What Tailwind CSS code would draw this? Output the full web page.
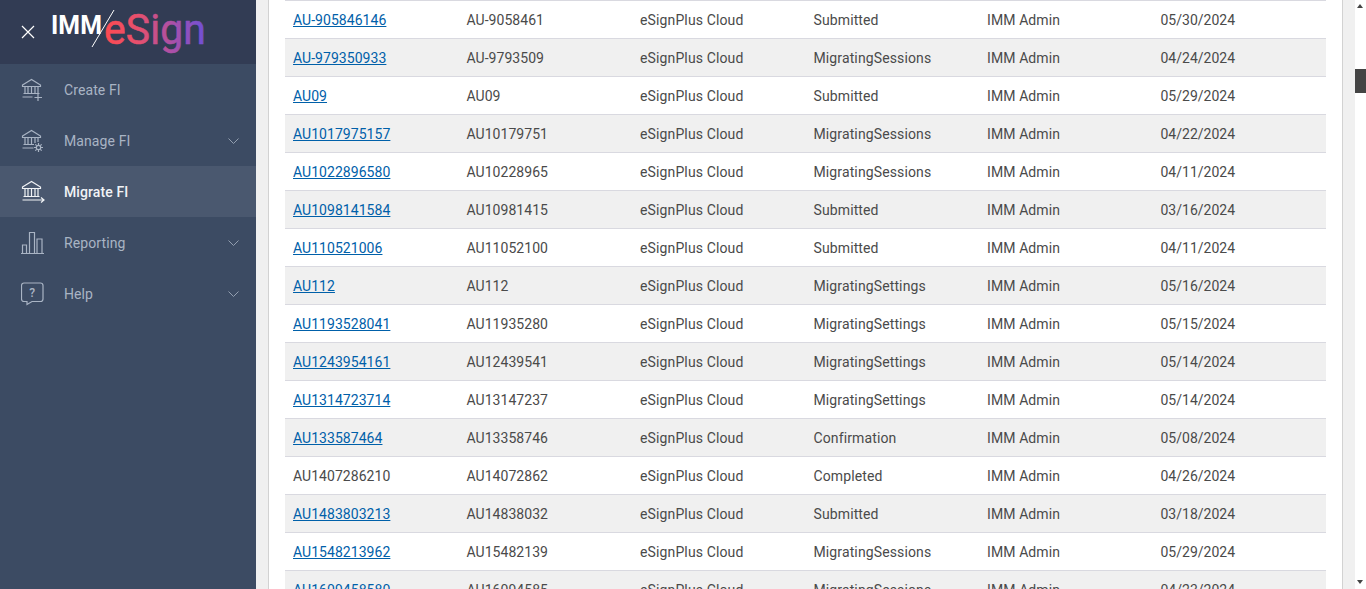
<!DOCTYPE html>
<html lang="en">

<head>
    <meta charset="UTF-8" />
    <meta name="viewport" content="width=device-width, initial-scale=1.0"/>
    <title>Migrate FI</title>
    <script src="https://cdn.jsdelivr.net/npm/@tailwindcss/browser@4"></script>
</head>

<body class="h-screen overflow-hidden bg-[#f0f0f0] font-['Roboto',sans-serif] text-sm text-[#4a4a4a]">

  <div class="flex h-[589px] overflow-hidden">

    <!-- Sidebar -->
    <aside class="w-64 shrink-0 bg-[#3c4b63] tracking-[0.1px] text-[#a9b4c4]">
      <div class="flex h-16 items-center bg-[#323c54] pl-[21px]">
        <svg class="h-[14px] w-[14px] shrink-0" viewBox="0 0 14 14" fill="none" stroke="#ffffff" stroke-width="1.2"><path d="M1 1l12 12M13 1L1 13"/></svg>
        <svg class="ml-[2px] h-16 w-[180px]" viewBox="0 0 180 64">
          <defs>
            <linearGradient id="logoGrad" x1="67" y1="0" x2="168" y2="0" gradientUnits="userSpaceOnUse">
              <stop offset="0" stop-color="#ff4a50"/>
              <stop offset="0.35" stop-color="#e5506f"/>
              <stop offset="0.7" stop-color="#a650ac"/>
              <stop offset="1" stop-color="#6f50d6"/>
            </linearGradient>
          </defs>
          <text x="14" y="34" font-family="Roboto" font-weight="700" font-size="26" fill="#ffffff" textLength="51" lengthAdjust="spacingAndGlyphs">IMM</text>
          <path d="M55 47L77 10" stroke="#ffffff" stroke-width="1"/>
          <text x="67" y="44" font-family="Roboto" font-weight="400" font-size="42" fill="url(#logoGrad)" stroke="url(#logoGrad)" stroke-width="0.6" textLength="102" lengthAdjust="spacingAndGlyphs">eSign</text>
        </svg>
      </div>

      <nav>
        <a href="#" class="flex h-[51px] items-center pl-[21px] pr-[17px]">
          <svg class="h-6 w-6 shrink-0" viewBox="0 0 24 24" fill="none" stroke="currentColor" stroke-width="1.2">
            <path d="M1.5 7L10.5 1.5L19.5 7V8.5H1.5zM4 8.5V15.5M7 8.5V15.5M10.5 8.5V15.5M14 8.5V15.5M17 8.5V15.5M2.5 15.5H18.5M1.5 19H11.5"/>
            <path d="M17 16V23M13.5 19.5H21"/>
          </svg>
          <span class="ml-[19px]">Create FI</span>
        </a>
        <a href="#" class="flex h-[51px] items-center pl-[21px] pr-[17px]">
          <svg class="h-6 w-6 shrink-0" viewBox="0 0 24 24" fill="none" stroke="currentColor" stroke-width="1.2">
            <path d="M1.5 7L10.5 1.5L19.5 7V8.5H1.5zM4 8.5V15.5M7 8.5V15.5M10.5 8.5V15.5M14 8.5V14M17 8.5V13M2.5 15.5H13M1.5 19H12.5"/>
            <circle cx="17.5" cy="18.5" r="2.2"/>
            <path d="M17.5 14v2M17.5 21v2M13 18.5h2M20 18.5h2M14.3 15.3l1.4 1.4M19.3 20.3l1.4 1.4M20.7 15.3l-1.4 1.4M15.7 20.3l-1.4 1.4"/>
          </svg>
          <span class="ml-[19px]">Manage FI</span>
          <svg class="ml-auto h-[6px] w-[11px] opacity-80" viewBox="0 0 11 6" fill="none" stroke="currentColor"><path d="M0.5 0.5l5 5 5-5"/></svg>
        </a>
        <a href="#" class="flex h-[51px] items-center bg-[#4a586f] pl-[21px] pr-[17px] font-medium text-[#f1f3f6]">
          <svg class="h-6 w-6 shrink-0" viewBox="0 0 24 24" fill="none" stroke="currentColor" stroke-width="1.2">
            <path d="M1.5 7L10.5 1.5L19.5 7V8.5H1.5zM4 8.5V16M7 8.5V16M10.5 8.5V16M14 8.5V16M17 8.5V16M2.5 16.5H18.5M1.5 20H22.5M20 17.5L23 20L20 22.5"/>
          </svg>
          <span class="ml-[19px]">Migrate FI</span>
        </a>
        <a href="#" class="flex h-[51px] items-center pl-[21px] pr-[17px]">
          <svg class="h-6 w-6 shrink-0" viewBox="0 0 24 24" fill="none" stroke="currentColor" stroke-width="1.2">
            <path d="M0 22.5H23M1.5 22V14H5.5V22M8.5 22V1.5H13.5V22M16 22V8H21V22"/>
          </svg>
          <span class="ml-[19px]">Reporting</span>
          <svg class="ml-auto h-[6px] w-[11px] opacity-80" viewBox="0 0 11 6" fill="none" stroke="currentColor"><path d="M0.5 0.5l5 5 5-5"/></svg>
        </a>
        <a href="#" class="flex h-[51px] items-center pl-[21px] pr-[17px]">
          <svg class="h-6 w-6 shrink-0" viewBox="0 0 24 24" fill="none" stroke="currentColor" stroke-width="1.2">
            <path d="M3 1H19.5A2.5 2.5 0 0 1 22 3.5V17A2.5 2.5 0 0 1 19.5 19.5H11L6 22.5V19.5H3A2.5 2.5 0 0 1 0.5 17V3.5A2.5 2.5 0 0 1 3 1Z"/>
            <text x="11.2" y="15" text-anchor="middle" font-family="Roboto" font-size="12" font-weight="500" fill="currentColor" stroke="none">?</text>
          </svg>
          <span class="ml-[19px]">Help</span>
          <svg class="ml-auto h-[6px] w-[11px] opacity-80" viewBox="0 0 11 6" fill="none" stroke="currentColor"><path d="M0.5 0.5l5 5 5-5"/></svg>
        </a>
      </nav>
    </aside>

    <!-- Main panel -->
    <main class="ml-3 h-full w-[1075px] shrink-0 overflow-hidden border-x border-[#d2d2d2] bg-white pl-4 pr-4">
      <table class="w-[1041px] table-fixed border-collapse">
        <tbody id="rows"></tbody>
      </table>
    </main>

    <!-- Page scrollbar -->
    <div class="relative ml-3 h-full w-[11px] shrink-0 bg-white">
      <span class="absolute left-[2px] top-[4px] h-0 w-0 border-x-[3px] border-b-[4px] border-x-transparent border-b-[#444444]"></span>
      <span class="absolute left-0 top-[69px] h-6 w-full bg-[#444444]"></span>
      <span class="absolute bottom-[5px] left-[2px] h-0 w-0 border-x-[3px] border-t-[4px] border-x-transparent border-t-[#444444]"></span>
    </div>
  </div>

  <script>
    const migrations = [
      ["AU-905846146", "AU-9058461", "Submitted", "05/30/2024", true],
      ["AU-979350933", "AU-9793509", "MigratingSessions", "04/24/2024", true],
      ["AU09", "AU09", "Submitted", "05/29/2024", true],
      ["AU1017975157", "AU10179751", "MigratingSessions", "04/22/2024", true],
      ["AU1022896580", "AU10228965", "MigratingSessions", "04/11/2024", true],
      ["AU1098141584", "AU10981415", "Submitted", "03/16/2024", true],
      ["AU110521006", "AU11052100", "Submitted", "04/11/2024", true],
      ["AU112", "AU112", "MigratingSettings", "05/16/2024", true],
      ["AU1193528041", "AU11935280", "MigratingSettings", "05/15/2024", true],
      ["AU1243954161", "AU12439541", "MigratingSettings", "05/14/2024", true],
      ["AU1314723714", "AU13147237", "MigratingSettings", "05/14/2024", true],
      ["AU133587464", "AU13358746", "Confirmation", "05/08/2024", true],
      ["AU1407286210", "AU14072862", "Completed", "04/26/2024", false],
      ["AU1483803213", "AU14838032", "Submitted", "03/18/2024", true],
      ["AU1548213962", "AU15482139", "MigratingSessions", "05/29/2024", true],
      ["AU1609458580", "AU16094585", "MigratingSessions", "04/23/2024", true]
    ];

    const tbody = document.getElementById('rows');

    migrations.forEach((m, i) => {
      const tr = document.createElement('tr');
      tr.className = i % 2 ? 'h-[38px] border-t border-[#d9d9e0] bg-[#f0f0f0]' : 'h-[38px] border-t border-[#d9d9e0] bg-white';
      const first = m[4] ? `<a href="#" class="text-[#0060a9] underline">${m[0]}</a>` : m[0];
      tr.innerHTML = `
        <td class="px-2 py-0 tracking-[0.05px]">${first}</td>
        <td class="px-2 py-0 tracking-[0.05px]">${m[1]}</td>
        <td class="px-2 py-0 tracking-[0.13px]">eSignPlus Cloud</td>
        <td class="px-2 py-0 tracking-[0.12px]">${m[2]}</td>
        <td class="px-2 py-0 tracking-[0.1px]">IMM Admin</td>
        <td class="px-2 py-0">${m[3]}</td>
      `;
      tbody.appendChild(tr);
    });
  </script>

</body>

</html>
